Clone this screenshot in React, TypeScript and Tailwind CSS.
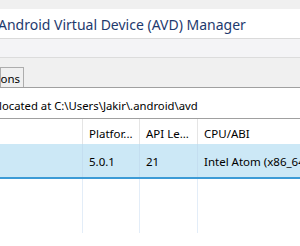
import React from "react";

const font = { fontFamily: '"Noto Sans", "Open Sans", sans-serif' };

export default function App() {
  const cols = [
    { w: "w-[83px]", h: "", v: "" },
    { w: "w-[57px]", h: "Platfor...", v: "5.0.1" },
    { w: "w-[58px]", h: "API Le...", v: "21" },
  ];
  return (
    <div className="w-[300px] h-[246px] bg-white overflow-hidden flex flex-col" style={font}>
      <div className="h-[9px] bg-[#f0f0f0] shrink-0" />
      <div className="h-[30px] shrink-0 bg-white border-b border-[#dadada] flex items-start pt-[9px]">
        <span className="-ml-[2px] text-[14px] text-[#1e3a6e] whitespace-nowrap leading-none">
          Android Virtual Device (AVD) Manager
        </span>
      </div>
      <div className="h-[19px] shrink-0 bg-[#f4f4f6] border-b border-[#dcdcdc]" />
      <div className="h-[30px] shrink-0 bg-[#f0f0f0] border-b border-[#a0a0a0] flex items-end">
        <div className="h-[20px] w-[24px] border border-b-0 border-[#adadad] bg-[#f0f0f0] flex items-start justify-end pt-[5px] pr-[3px] overflow-hidden">
          <span className="text-[11.5px] text-black leading-none whitespace-nowrap">ions</span>
        </div>
      </div>
      <div className="h-[31px] shrink-0 bg-white border-b border-[#a0a0a0] flex items-start pt-[12px]">
        <span className="-ml-[1px] text-[11.3px] text-black whitespace-nowrap leading-none">
          located at C:\Users\Jakir\.android\avd
        </span>
      </div>
      <div className="flex h-[25px] shrink-0 bg-white">
        {cols.map((c, i) => (
          <div key={i} className={`${c.w} shrink-0 border-r border-[#e5e5e5] flex items-start pt-[9px] pl-[6px]`}>
            <span className="text-[11.5px] text-black whitespace-nowrap leading-none">{c.h}</span>
          </div>
        ))}
        <div className="flex-1 flex items-start pt-[9px] pl-[6px]">
          <span className="text-[11.5px] text-black whitespace-nowrap leading-none">CPU/ABI</span>
        </div>
      </div>
      <div className="flex h-[35px] shrink-0 bg-[#cce8f6] border-b-2 border-[#3c9bd6]">
        {cols.map((c, i) => (
          <div key={i} className={`${c.w} shrink-0 border-r border-[#c4def0] flex items-start pt-[12px] pl-[6px]`}>
            <span className="text-[11.5px] text-black whitespace-nowrap leading-none">{c.v}</span>
          </div>
        ))}
        <div className="flex-1 flex items-start pt-[12px] pl-[6px] overflow-hidden">
          <span className="text-[11.5px] text-black whitespace-nowrap leading-none">Intel Atom (x86_64)</span>
        </div>
      </div>
      <div className="flex h-[54px] shrink-0">
        {cols.map((c, i) => (
          <div key={i} className={`${c.w} shrink-0 border-r border-[#e3edf8]`} />
        ))}
        <div className="flex-1" />
      </div>
    </div>
  );
}
